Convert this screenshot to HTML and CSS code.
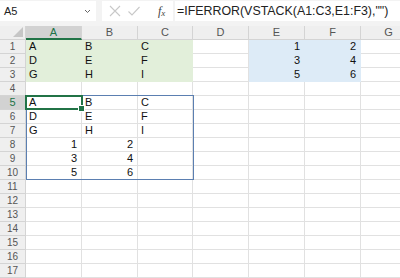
FILE: index.html
```html
<!DOCTYPE html>
<html lang="ja">
<head>
  <meta charset="UTF-8" />
  <title>VSTACK</title>
  <link rel="stylesheet" href="styles.css">
</head>
<body>

<div class="formula-bar">
  <div class="name-box">
    <span>A5</span>
    <svg class="chev" width="7" height="5" viewBox="0 0 7 5"><path d="M1 1 L3.5 3.5 L6 1" fill="none" stroke="#666" stroke-width="1"/></svg>
  </div>
  <div class="fx-buttons">
    <svg width="14" height="14" viewBox="0 0 14 14"><path d="M2 2 L12 12 M12 2 L2 12" stroke="#c8c8c8" stroke-width="1.1"/></svg>
    <svg width="14" height="14" viewBox="0 0 14 14"><path d="M1.5 7.5 L5 11 L12.5 3" fill="none" stroke="#c8c8c8" stroke-width="1.1"/></svg>
    <span class="fx">f<sub>x</sub></span>
  </div>
  <div class="formula">=IFERROR(VSTACK(A1:C3,E1:F3),"")</div>
</div>

<div class="sheet">
  <div class="grid">
    <div class="corner"></div><div class="ch sel">A</div><div class="ch">B</div><div class="ch">C</div><div class="ch">D</div><div class="ch">E</div><div class="ch">F</div><div class="ch">G</div>

    <div class="rh">1</div><div class="c green">A</div><div class="c green">B</div><div class="c green">C</div><div class="c"></div><div class="c blue num">1</div><div class="c blue num">2</div><div class="c"></div>
    <div class="rh">2</div><div class="c green">D</div><div class="c green">E</div><div class="c green">F</div><div class="c"></div><div class="c blue num">3</div><div class="c blue num">4</div><div class="c"></div>
    <div class="rh">3</div><div class="c green">G</div><div class="c green">H</div><div class="c green">I</div><div class="c"></div><div class="c blue num">5</div><div class="c blue num">6</div><div class="c"></div>
    <div class="rh">4</div><div class="c"></div><div class="c"></div><div class="c"></div><div class="c"></div><div class="c"></div><div class="c"></div><div class="c"></div>
    <div class="rh sel">5</div><div class="c">A</div><div class="c">B</div><div class="c">C</div><div class="c"></div><div class="c"></div><div class="c"></div><div class="c"></div>
    <div class="rh">6</div><div class="c">D</div><div class="c">E</div><div class="c">F</div><div class="c"></div><div class="c"></div><div class="c"></div><div class="c"></div>
    <div class="rh">7</div><div class="c">G</div><div class="c">H</div><div class="c">I</div><div class="c"></div><div class="c"></div><div class="c"></div><div class="c"></div>
    <div class="rh">8</div><div class="c num">1</div><div class="c num">2</div><div class="c"></div><div class="c"></div><div class="c"></div><div class="c"></div><div class="c"></div>
    <div class="rh">9</div><div class="c num">3</div><div class="c num">4</div><div class="c"></div><div class="c"></div><div class="c"></div><div class="c"></div><div class="c"></div>
    <div class="rh">10</div><div class="c num">5</div><div class="c num">6</div><div class="c"></div><div class="c"></div><div class="c"></div><div class="c"></div><div class="c"></div>
    <div class="rh">11</div><div class="c"></div><div class="c"></div><div class="c"></div><div class="c"></div><div class="c"></div><div class="c"></div><div class="c"></div>
    <div class="rh">12</div><div class="c"></div><div class="c"></div><div class="c"></div><div class="c"></div><div class="c"></div><div class="c"></div><div class="c"></div>
    <div class="rh">13</div><div class="c"></div><div class="c"></div><div class="c"></div><div class="c"></div><div class="c"></div><div class="c"></div><div class="c"></div>
    <div class="rh">14</div><div class="c"></div><div class="c"></div><div class="c"></div><div class="c"></div><div class="c"></div><div class="c"></div><div class="c"></div>
    <div class="rh">15</div><div class="c"></div><div class="c"></div><div class="c"></div><div class="c"></div><div class="c"></div><div class="c"></div><div class="c"></div>
    <div class="rh">16</div><div class="c"></div><div class="c"></div><div class="c"></div><div class="c"></div><div class="c"></div><div class="c"></div><div class="c"></div>
    <div class="rh">17</div><div class="c"></div><div class="c"></div><div class="c"></div><div class="c"></div><div class="c"></div><div class="c"></div><div class="c"></div>
  </div>
  <div class="spill"></div>
  <div class="active"><span class="handle"></span></div>
</div>

</body>
</html>
```

FILE: styles.css
```css
body {
  margin: 0;
  font-family: 'Liberation Sans', Arial, sans-serif;
  background: #fff;
  width: 400px;
  height: 278px;
  overflow: hidden;
}
.formula-bar {
  display: flex;
  height: 26px;
  background: #f3f3f3;
  padding-top: 1px;
  box-sizing: border-box;
}
.name-box {
  width: 96px;
  height: 20px;
  background: #fff;
  display: flex;
  align-items: center;
  justify-content: space-between;
  padding: 0 5px 0 4px;
  box-sizing: border-box;
  font-size: 11px;
  color: #222;
}
.fx-buttons {
  width: 71px;
  height: 20px;
  margin-left: 6px;
  background: #fff;
  display: flex;
  align-items: center;
  gap: 5px;
  padding-left: 6px;
  box-sizing: border-box;
}
.fx {
  font-family: 'Liberation Serif', serif;
  font-style: italic;
  font-size: 12px;
  color: #444;
  margin-left: 12px;
}
.fx sub {
  font-size: 9px;
  vertical-align: -1px;
}
.formula {
  flex: 1;
  height: 20px;
  margin-left: 2px;
  background: #fff;
  font-size: 12.4px;
  line-height: 21px;
  color: #222;
  padding-left: 2px;
  white-space: nowrap;
}
.sheet {
  position: relative;
}
.grid {
  display: grid;
  grid-template-columns: 26px 56px 56px 55px 56px 56px 56px 56px;
  grid-auto-rows: 14px;
}
.corner {
  background: #efefef;
  border-right: 1px solid #d4d4d4;
  border-bottom: 1px solid #d4d4d4;
  box-sizing: border-box;
  position: relative;
}
.corner::after {
  content: "";
  position: absolute;
  right: 2px;
  bottom: 2px;
  border-left: 10px solid transparent;
  border-bottom: 10px solid #c6c6c6;
}
.ch, .rh {
  background: #efefef;
  color: #555;
  font-size: 11px;
  line-height: 13px;
  text-align: center;
  border-right: 1px solid #d4d4d4;
  border-bottom: 1px solid #d4d4d4;
  box-sizing: border-box;
}
.rh {
  font-size: 10px;
}
.ch.sel {
  background: #d2d2d2;
  color: #217346;
  border-bottom: 2px solid #217346;
  line-height: 12px;
}
.rh.sel {
  background: #d2d2d2;
  color: #217346;
  font-size: 11px;
}
.c {
  border-right: 1px solid #e1e1e1;
  border-bottom: 1px solid #e1e1e1;
  box-sizing: border-box;
  font-size: 11px;
  line-height: 13px;
  padding: 0 4px 0 3px;
  color: #111;
  white-space: nowrap;
}
.num {
  text-align: right;
}
.green {
  background: #e2efda;
  border-color: #e2efda;
}
.blue {
  background: #ddebf7;
  border-color: #ddebf7;
}
.spill {
  position: absolute;
  left: 26px;
  top: 69px;
  width: 168px;
  height: 85px;
  border: 1px solid #5b7fb1;
  box-sizing: border-box;
}
.active {
  position: absolute;
  left: 25px;
  top: 69px;
  width: 58px;
  height: 15px;
  border: 2px solid #217346;
  box-sizing: border-box;
}
.handle {
  position: absolute;
  right: -4px;
  bottom: -4px;
  width: 5px;
  height: 5px;
  background: #217346;
  border: 1px solid #fff;
}
```
